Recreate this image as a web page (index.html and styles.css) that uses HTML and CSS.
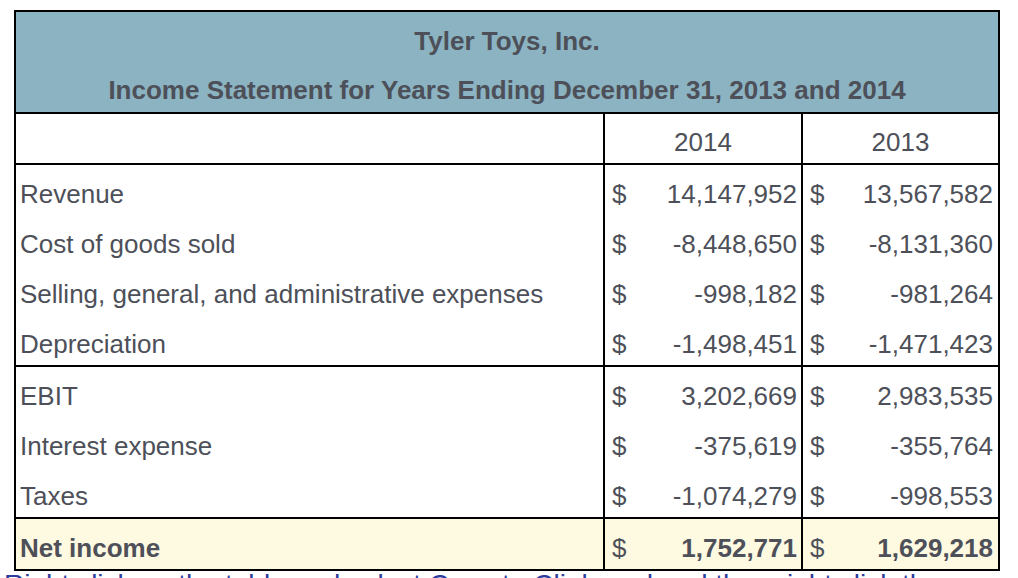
FILE: index.html
```html
<!DOCTYPE html>
<html lang="en">
<head>
<meta charset="utf-8">
<title>Tyler Toys, Inc. Income Statement</title>
<link rel="stylesheet" href="styles.css">
</head>
<body>
<div class="sheet">
  <div class="title">
    <div>Tyler Toys, Inc.</div>
    <div>Income Statement for Years Ending December 31, 2013 and 2014</div>
  </div>
  <div class="group years">
    <div class="row">
      <div class="cell label"></div>
      <div class="cell year">2014</div>
      <div class="cell year">2013</div>
    </div>
  </div>
  <div class="group">
    <div class="row">
      <div class="cell label">Revenue</div>
      <div class="cell money"><span>$</span><span>14,147,952</span></div>
      <div class="cell money last"><span>$</span><span>13,567,582</span></div>
    </div>
    <div class="row">
      <div class="cell label">Cost of goods sold</div>
      <div class="cell money"><span>$</span><span>-8,448,650</span></div>
      <div class="cell money last"><span>$</span><span>-8,131,360</span></div>
    </div>
    <div class="row">
      <div class="cell label">Selling, general, and administrative expenses</div>
      <div class="cell money"><span>$</span><span>-998,182</span></div>
      <div class="cell money last"><span>$</span><span>-981,264</span></div>
    </div>
    <div class="row">
      <div class="cell label">Depreciation</div>
      <div class="cell money"><span>$</span><span>-1,498,451</span></div>
      <div class="cell money last"><span>$</span><span>-1,471,423</span></div>
    </div>
  </div>
  <div class="group">
    <div class="row">
      <div class="cell label">EBIT</div>
      <div class="cell money"><span>$</span><span>3,202,669</span></div>
      <div class="cell money last"><span>$</span><span>2,983,535</span></div>
    </div>
    <div class="row">
      <div class="cell label">Interest expense</div>
      <div class="cell money"><span>$</span><span>-375,619</span></div>
      <div class="cell money last"><span>$</span><span>-355,764</span></div>
    </div>
    <div class="row">
      <div class="cell label">Taxes</div>
      <div class="cell money"><span>$</span><span>-1,074,279</span></div>
      <div class="cell money last"><span>$</span><span>-998,553</span></div>
    </div>
  </div>
  <div class="group total">
    <div class="row">
      <div class="cell label">Net income</div>
      <div class="cell money"><span>$</span><span>1,752,771</span></div>
      <div class="cell money last"><span>$</span><span>1,629,218</span></div>
    </div>
  </div>
</div>
<p class="hint">Right click on the table and select Copy to Clipboard and then right click the</p>
</body>
</html>
```

FILE: styles.css
```css
html, body {
  margin: 0;
  padding: 0;
  background: #ffffff;
}

body {
  font-family: "Liberation Sans", Arial, sans-serif;
  color: #4d5059;
  font-size: 26px;
}

.sheet {
  width: 982px;
  margin: 10px 0 0 14px;
  border: 2px solid #000;
}

.title {
  box-sizing: border-box;
  height: 102px;
  padding-top: 5px;
  background: #8bb3c2;
  border-bottom: 2px solid #000;
  text-align: center;
  font-weight: 700;
  line-height: 49px;
  overflow: hidden;
}

.group {
  border-bottom: 2px solid #000;
}

.group:last-child {
  border-bottom: 0;
}

.row {
  display: grid;
  grid-template-columns: 587px 198px 197px;
  height: 50px;
}

.years .row {
  height: 49px;
}

.cell {
  box-sizing: border-box;
  height: 100%;
  padding-top: 8px;
  line-height: 42px;
  white-space: nowrap;
}

.years .cell {
  line-height: 41px;
}

.label {
  padding-left: 4px;
}

.year {
  border-left: 2px solid #000;
  text-align: center;
}

.money {
  border-left: 2px solid #000;
  display: flex;
  justify-content: space-between;
  padding-left: 7px;
  padding-right: 4px;
}

.money.last {
  padding-right: 5px;
}

.total {
  background: #fef9e1;
  font-weight: 700;
}

.total .money span:first-child {
  font-weight: 400;
}

.hint {
  margin: 0 0 0 4px;
  font-size: 28px;
  line-height: 28px;
  color: #2b3a9c;
  white-space: nowrap;
}
```
